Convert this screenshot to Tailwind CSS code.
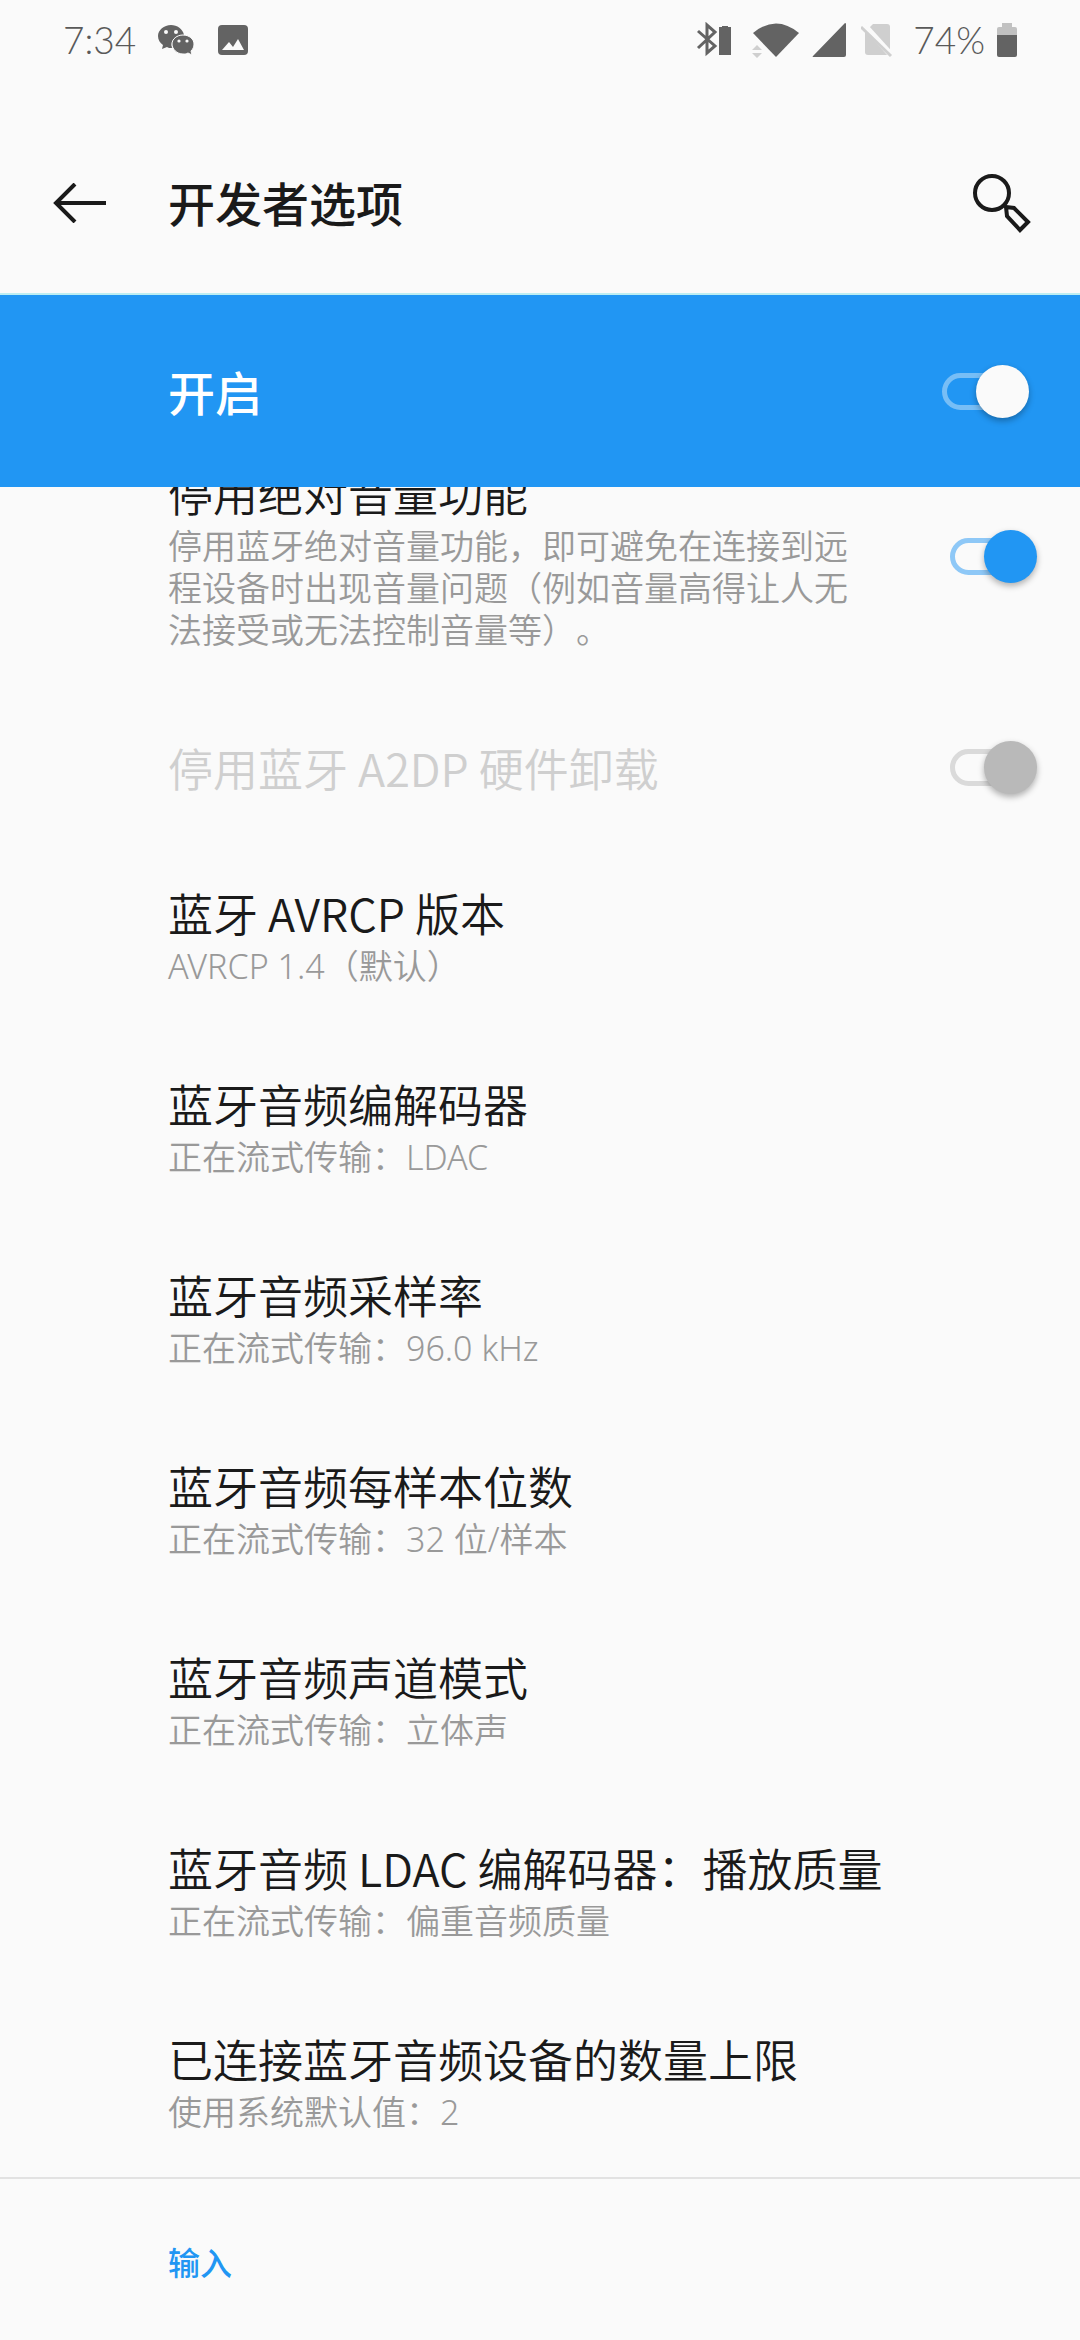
<!DOCTYPE html>
<html lang="zh-CN">
<head>
  <meta charset="UTF-8" />
  <meta name="viewport" content="width=device-width, initial-scale=1.0" />
  <title>开发者选项</title>
  <script src="https://cdn.jsdelivr.net/npm/@tailwindcss/browser@4"></script>
  <style>
    body {
      font-family: "Noto Sans CJK SC", sans-serif;
      text-spacing-trim: space-all;
    }

    .latin {
      font-family: "Noto Sans", "Noto Sans CJK SC", sans-serif;
    }

    .clock {
      font-family: Lato, sans-serif;
    }

    .switch {
      appearance: none;
      position: relative;
      flex: none;
      width: 87px;
      height: 53px;
      color: #2196f3;
    }

    .switch::before {
      content: "";
      position: absolute;
      inset: 8px 8px 8px 0;
      border: 5px solid currentColor;
      border-radius: 999px;
      opacity: 0.5;
    }

    .switch::after {
      content: "";
      position: absolute;
      top: 0;
      right: 0;
      width: 53px;
      height: 53px;
      border-radius: 50%;
      background: currentColor;
      box-shadow: 0 3px 6px rgba(0, 0, 0, 0.3);
    }

    .switch.light { color: #fafafa; }
    .switch.light::before { opacity: 0.4; }
    .switch:disabled { color: #b9b9b9; }
  </style>
</head>
<body class="bg-[#fafafa] text-[#1a1a1a]">

  <!-- status bar -->
  <div class="clock flex h-20 items-center justify-between pl-[63px] pr-[63px] text-[37px] font-light text-[#595959]">
    <div class="flex items-center">
      <span>7:34</span>
      <svg class="ml-[22px] h-9 w-9" viewBox="0 0 36 36" fill="#636363">
        <path d="M13 3C6 3 0 8 0 14c0 4 2 7 5 9l-1 4 5-2c1 1 3 1 5 1-2-8 4-13 12-13C25 7 19 3 13 3z" />
        <path d="M25 13c-6 0-11 4-11 9s5 10 11 10c2 0 3 0 5-1l4 2-1-4c2-2 3-4 3-7 0-5-5-9-11-9z" stroke="#fafafa" />
        <g fill="#fafafa">
          <circle cx="8" cy="10" r="2" /><circle cx="18" cy="10" r="2" />
          <circle cx="21" cy="19" r="1.6" /><circle cx="29" cy="19" r="1.6" />
        </g>
      </svg>
      <svg class="ml-6 h-[30px] w-[30px]" viewBox="0 0 30 30">
        <rect width="30" height="30" rx="4" fill="#636363" />
        <path d="M4 25l7-8 4 5 5-8 6 11z" fill="#fafafa" />
      </svg>
    </div>
    <div class="flex items-center">
      <svg class="h-9 w-9" viewBox="0 0 36 36">
        <path d="M2 9l17 15-8 7V3l8 7L2 26" fill="none" stroke="#636363" stroke-width="3" />
        <path d="M23 5h3V4h6v1h3v28H23z" fill="#636363" />
      </svg>
      <svg class="ml-5 h-9 w-12" viewBox="0 0 48 36">
        <path d="M1 11Q24-8 47 11L24 35z" fill="#636363" />
        <path d="M0 28l5-5 5 5zM0 31h10l-5 5z" fill="#cfcfcf" />
      </svg>
      <svg class="ml-3 h-9 w-[35px]" viewBox="0 0 35 36">
        <path d="M34 2v31q0 2-2 2H1q-1 0 0-1L33 1q1 0 1 1z" fill="#636363" />
      </svg>
      <svg class="ml-3.5 h-9 w-8" viewBox="0 0 32 36">
        <path d="M12 2h14q3 0 3 3v25q0 3-3 3H7q-3 0-3-3V10z" fill="#cfcfcf" />
        <path d="M3 3l29 32" stroke="#fafafa" stroke-width="6" />
        <path d="M0 5l30 29" stroke="#cfcfcf" stroke-width="3" />
      </svg>
      <span class="ml-5">74%</span>
      <svg class="ml-3 h-9 w-5" viewBox="0 0 20 36">
        <path d="M0 14V7q0-2 2-2h3V1h10v4h3q2 0 2 2v7z" fill="#c1c1c1" />
        <path d="M0 13h20v20q0 2-2 2H2q-2 0-2-2z" fill="#636363" />
      </svg>
    </div>
  </div>

  <!-- app bar -->
  <header class="flex h-[213px] items-center pl-[52px] pr-12 pt-8">
    <button type="button" aria-label="返回" class="w-14">
      <svg class="h-10 w-14" viewBox="0 0 56 40" fill="none" stroke="#1a1a1a" stroke-width="4">
        <path d="M54 20H4M23 1L4 20l19 19" />
      </svg>
    </button>
    <h1 class="ml-[60px] flex-1 text-[47px] font-medium">开发者选项</h1>
    <button type="button" aria-label="搜索" class="w-[60px]">
      <svg class="h-[60px] w-[60px]" viewBox="0 0 60 60" fill="none" stroke="#1a1a1a" stroke-width="4">
        <circle cx="20" cy="20" r="17" />
        <path d="M34 34l8 1 14 14-8 8-13-14z" />
      </svg>
    </button>
  </header>

  <label class="flex h-[194px] items-center justify-between border-t-2 border-[#bdeef2] bg-[#2196f3] pl-[168px] pr-[51px] text-[47px] font-medium text-white">
    开启
    <input type="checkbox" checked class="switch light" />
  </label>

  <!-- list, scrolled part of the way under the bar above -->
  <main class="overflow-hidden">
    <div class="-mt-[67px] border-b-2 border-[#e2e2e2] text-[34px] font-[350] leading-[42px] text-[#999999]">
      <label class="flex items-center justify-between gap-[84px] pb-11 pl-[168px] pr-[43px] pt-[41px]">
        <span class="flex-1">
          <span class="block text-[45px] leading-[64px] text-[#1a1a1a]">停用绝对音量功能</span>
          <span class="latin block">停用蓝牙绝对音量功能，即可避免在连接到远程设备时出现音量问题（例如音量高得让人无法接受或无法控制音量等）。</span>
        </span>
        <input type="checkbox" checked class="switch" />
      </label>
      <label class="flex h-[145px] items-center justify-between pl-[168px] pr-[43px] text-[45px] text-[#cfcfcf]">
        停用蓝牙 A2DP 硬件卸载
        <input type="checkbox" checked disabled class="switch" />
      </label>
      <a href="#" class="block pb-11 pl-[168px] pt-[41px]">
        <span class="block text-[45px] leading-[64px] text-[#1a1a1a]">蓝牙 AVRCP 版本</span>
        <span class="latin block">AVRCP 1.4（默认）</span>
      </a>
      <a href="#" class="block pb-11 pl-[168px] pt-[41px]">
        <span class="block text-[45px] leading-[64px] text-[#1a1a1a]">蓝牙音频编解码器</span>
        <span class="latin block">正在流式传输：LDAC</span>
      </a>
      <a href="#" class="block pb-11 pl-[168px] pt-[41px]">
        <span class="block text-[45px] leading-[64px] text-[#1a1a1a]">蓝牙音频采样率</span>
        <span class="latin block">正在流式传输：96.0 kHz</span>
      </a>
      <a href="#" class="block pb-11 pl-[168px] pt-[41px]">
        <span class="block text-[45px] leading-[64px] text-[#1a1a1a]">蓝牙音频每样本位数</span>
        <span class="latin block">正在流式传输：32 位/样本</span>
      </a>
      <a href="#" class="block pb-11 pl-[168px] pt-[41px]">
        <span class="block text-[45px] leading-[64px] text-[#1a1a1a]">蓝牙音频声道模式</span>
        <span class="latin block">正在流式传输：立体声</span>
      </a>
      <a href="#" class="block pb-11 pl-[168px] pt-[41px]">
        <span class="block text-[45px] leading-[64px] text-[#1a1a1a]">蓝牙音频 LDAC 编解码器：播放质量</span>
        <span class="latin block">正在流式传输：偏重音频质量</span>
      </a>
      <a href="#" class="block pb-11 pl-[168px] pt-[41px]">
        <span class="block text-[45px] leading-[64px] text-[#1a1a1a]">已连接蓝牙音频设备的数量上限</span>
        <span class="latin block">使用系统默认值：2</span>
      </a>
    </div>
    <h2 class="pb-14 pl-[168px] pt-[61px] text-[32px] font-medium leading-[42px] text-[#2196f3]">输入</h2>
  </main>

</body>
</html>
